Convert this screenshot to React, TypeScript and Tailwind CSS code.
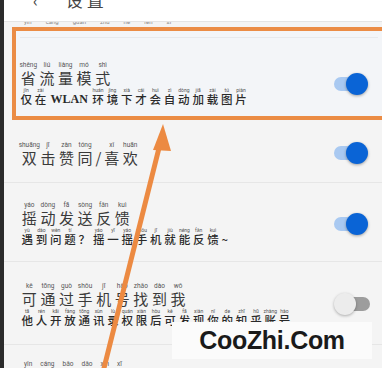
import React from 'react';

type Seg = [string, string];

const cjk = { fontFamily: '"Noto Sans CJK SC", "Noto Sans", sans-serif' };
const pyFont = { fontFamily: 'Roboto, "Noto Sans", sans-serif' };

const split = (chars: string, pinyin: string): Seg[] => {
    const py = pinyin.split(' ');
    return Array.from(chars).map((c, i) => [c, py[i] || '']);
};

// one line of characters with pinyin above each of them
const PinyinLine = ({ segs, size }: { segs: Seg[]; size: 'title' | 'sub' }) => {
    const title = size === 'title';
    return (
        <div className="flex items-end">
            {segs.map(([ch, py], i) => {
                const narrow = ch === '/' || ch === '~';
                const latin = ch.length > 1;
                let box = title ? 'w-[18.6px]' : 'w-[14.3px]';
                if (narrow) box = title ? 'w-[8px]' : 'w-[9px]';
                if (latin) box = 'px-[3px]';
                return (
                    <span key={i} className={'flex flex-col items-center shrink-0 ' + box}>
                        <span
                            style={pyFont}
                            className={
                                title
                                    ? 'text-[6.5px] leading-[8px] text-[#555] whitespace-nowrap'
                                    : 'text-[5px] leading-[6px] text-[#555] whitespace-nowrap'
                            }
                        >
                            {py || '\u00a0'}
                        </span>
                        <span
                            style={latin ? { fontFamily: '"Liberation Serif", serif' } : cjk}
                            className={
                                title
                                    ? 'text-[15px] leading-[17px] text-[#3a3a3a]'
                                    : latin
                                      ? 'text-[12px] leading-[13px] font-bold text-[#2a2a2a]'
                                      : 'text-[11.5px] leading-[13px] font-medium text-[#2a2a2a]'
                            }
                        >
                            {ch}
                        </span>
                    </span>
                );
            })}
        </div>
    );
};

const Toggle = ({ on }: { on: boolean }) => (
    <div className="relative w-[36px] h-[22px] shrink-0">
        {on ? (
            <>
                <div className="absolute left-0 top-[4px] w-[30px] h-[14px] rounded-full bg-[#a9c9f1]" />
                <div className="absolute right-[2px] top-0 w-[22px] h-[22px] rounded-full bg-[#0a64d6] shadow-[0_1px_3px_rgba(0,0,0,0.35)]" />
            </>
        ) : (
            <>
                <div className="absolute left-[6px] top-[4px] w-[30px] h-[14px] rounded-full bg-[#9d9d9d]" />
                <div className="absolute left-0 top-0 w-[22px] h-[22px] rounded-full bg-[#ececec] shadow-[0_1px_3px_rgba(0,0,0,0.3)]" />
            </>
        )}
    </div>
);

const Row = ({
    title,
    sub,
    on,
    className,
}: {
    title: Seg[];
    sub?: Seg[];
    on: boolean;
    className: string;
}) => (
    <div className={'flex items-center justify-between ' + className}>
        <div className="flex flex-col gap-[1px]">
            <PinyinLine segs={title} size="title" />
            {sub && <PinyinLine segs={sub} size="sub" />}
        </div>
        <Toggle on={on} />
    </div>
);

export default function App() {
    const wlanSub: Seg[] = [
        ...split('仅在', 'jǐn zài'),
        [' WLAN ', ''],
        ...split('环境下才会自动加载图片', 'huán jìng xià cái huì zì dòng jiā zài tú piàn'),
    ];

    return (
        <div className="w-[382px] h-[368px] overflow-hidden flex bg-[#2b2b2b]">
            <div className="w-[4px] shrink-0" />
            <div className="relative flex-1 flex flex-col bg-[#f4f4f4]">
                {/* header, cut off at the top */}
                <div className="h-[21px] bg-white flex items-start overflow-hidden shrink-0" style={cjk}>
                    <span className="ml-[29px] -mt-[12px] text-[16px] text-[#444]">‹</span>
                    <span className="ml-[28px] -mt-[13px] text-[17px] text-[#444] tracking-[4px]">设置</span>
                </div>
                <div className="h-[6px] overflow-hidden shrink-0 flex gap-[14px] pl-[20px] border-t border-[#e4e4e4]">
                    {['yīn', 'cáng', 'guān', 'zhù', 'hé', 'fěn', 'sī'].map((p, i) => (
                        <span key={i} style={pyFont} className="text-[6px] leading-[6px] -mt-[3px] text-[#888]">
                            {p}
                        </span>
                    ))}
                </div>

                {/* highlighted row */}
                <div className="ml-[8px] border-[4px] border-r-0 border-[#eb8c45] bg-[#f3f5f8] shrink-0 h-[93px] flex flex-col">
                    <div className="h-[7px] border-b border-[#e7e9ec] mx-[4px]" />
                    <Row
                        className="pl-[3px] pr-[12px] pt-[23px]"
                        title={split('省流量模式', 'shěng liú liàng mó shì')}
                        sub={wlanSub}
                        on
                    />
                </div>

                <Row
                    className="pl-[16px] pr-[12px] pt-[4px] h-[64px] border-b border-[#e6e6e6]"
                    title={split('双击赞同/喜欢', 'shuāng jī zàn tóng  xǐ huān')}
                    on
                />
                <Row
                    className="pl-[16px] pr-[12px] pt-[3px] h-[79px] border-b border-[#e6e6e6]"
                    title={split('摇动发送反馈', 'yáo dòng fā sòng fǎn kuì')}
                    sub={split('遇到问题？摇一摇手机就能反馈~', 'yù dào wèn tí  yáo yī yáo shǒu jī jiù néng fǎn kuì ')}
                    on
                />
                <Row
                    className="pl-[16px] pr-[12px] pt-[3px] h-[84px] border-b border-[#e6e6e6]"
                    title={split('可通过手机号找到我', 'kě tōng guò shǒu jī hào zhǎo dào wǒ')}
                    sub={split(
                        '他人开放通讯录权限后可发现你的知乎账号',
                        'tā rén kāi fàng tōng xùn lù quán xiàn hòu kě fā xiàn nǐ de zhī hū zhàng hào',
                    )}
                    on={false}
                />
                <div className="pl-[20px] pt-[15px] flex gap-[8px]">
                    {['yǐn', 'cáng', 'bǎo', 'dǎo', 'xìn', 'xī'].map((p, i) => (
                        <span key={i} style={pyFont} className="text-[6.5px] leading-[8px] text-[#555]">
                            {p}
                        </span>
                    ))}
                </div>

                {/* annotation arrow */}
                <svg className="absolute inset-0 pointer-events-none" width="378" height="368" viewBox="0 0 378 368">
                    <line x1="99" y1="372" x2="157" y2="140" stroke="#ec8a42" strokeWidth="5" />
                    <polygon points="159,124 149,150 167,151" fill="#ec8a42" />
                </svg>

                {/* watermark */}
                <div className="absolute left-[168px] top-[322px] w-[200px] h-[37px] bg-[#fbfbfb] flex items-center justify-center">
                    <span
                        className="text-[25px] font-bold text-[#1a1a1a] tracking-[-0.3px]"
                        style={{ fontFamily: '"Liberation Sans", Arial, sans-serif' }}
                    >
                        CooZhi.Com
                    </span>
                </div>
            </div>
        </div>
    );
}
